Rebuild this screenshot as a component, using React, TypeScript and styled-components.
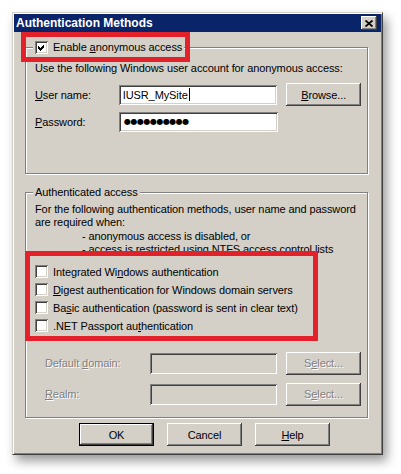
import React from 'react';
import styled, { createGlobalStyle, css } from 'styled-components';

const Global = createGlobalStyle`
  *, *::before, *::after { box-sizing: border-box; }
  html, body { margin: 0; padding: 0; background: #fff; }
  body { font-family: "Liberation Sans", Arial, sans-serif; font-size: 11px; letter-spacing: -0.1px; color: #000; }
`;

const Page = styled.div`
  width: 401px;
  height: 474px;
  padding: 12px 0 0 12px;
  overflow: hidden;
  background: #fff;
`;

const Window = styled.div`
  position: relative;
  width: 371px;
  height: 443px;
  background: #d4d0c8;
  border: 1px solid;
  border-color: #d4d0c8 #404040 #404040 #d4d0c8;
  padding: 1px;
  box-shadow: inset 1px 1px 0 #fff, inset -1px -1px 0 #808080, 4px 6px 10px rgba(0, 0, 0, 0.4);
  display: flex;
  flex-direction: column;
`;

const TitleBar = styled.div`
  height: 18px;
  background: #0a246a;
  display: flex;
  align-items: center;
  justify-content: space-between;
  padding: 0 4px 0 2px;
`;

const Title = styled.span`
  color: #fff;
  font-weight: bold;
  font-size: 12px;
  letter-spacing: 0;
  line-height: 18px;
`;

const CloseButton = styled.div`
  width: 16px;
  height: 14px;
  background: #d4d0c8;
  display: flex;
  align-items: center;
  justify-content: center;
  box-shadow: inset -1px -1px 0 #404040, inset 1px 1px 0 #fff, inset -2px -2px 0 #808080;
`;

const Content = styled.div`
  flex: 1;
  display: flex;
  flex-direction: column;
  padding: 15px 13px 0 11px;
`;

const GroupBox = styled.div<{ $height: number; $gap?: number }>`
  height: ${(p) => p.$height}px;
  margin-top: ${(p) => p.$gap ?? 0}px;
  border: 1px solid #808080;
  box-shadow: 1px 1px 0 #fff, inset 1px 1px 0 #fff;
  display: flex;
  flex-direction: column;
  padding: 0 6px 0 9px;
`;

const Legend = styled.div<{ $check?: boolean }>`
  align-self: flex-start;
  display: flex;
  align-items: center;
  gap: 5px;
  height: ${(p) => (p.$check ? 14 : 13)}px;
  line-height: 13px;
  margin: ${(p) => (p.$check ? -8 : -7)}px 0 0 -2px;
  padding: 0 2px;
  background: #d4d0c8;
`;

const Text = styled.div<{ $top?: number; $indent?: number }>`
  line-height: 13.4px;
  margin-top: ${(p) => p.$top ?? 0}px;
  padding-left: ${(p) => p.$indent ?? 0}px;
  white-space: nowrap;
`;

const FieldRow = styled.div<{ $top: number }>`
  display: flex;
  align-items: center;
  height: 23px;
  margin-top: ${(p) => p.$top}px;
`;

const Label = styled.div<{ $width: number; $indent?: number; $disabled?: boolean }>`
  width: ${(p) => p.$width}px;
  padding-left: ${(p) => p.$indent ?? 0}px;
  white-space: nowrap;
  ${(p) =>
    p.$disabled &&
    css`
      color: #808080;
      text-shadow: 1px 1px 0 #fff;
    `}
`;

const Input = styled.div<{ $width: number; $height?: number; $disabled?: boolean }>`
  width: ${(p) => p.$width}px;
  height: ${(p) => p.$height ?? 20}px;
  background: ${(p) => (p.$disabled ? '#d4d0c8' : '#fff')};
  box-shadow: inset 1px 1px 0 #808080, inset -1px -1px 0 #fff, inset 2px 2px 0 #404040,
    inset -2px -2px 0 #d4d0c8;
  display: flex;
  align-items: center;
  padding: 0 4px;
  white-space: nowrap;
`;

const Caret = styled.span`
  display: inline-block;
  width: 1px;
  height: 13px;
  background: #000;
  margin-left: 1px;
`;

const Dots = styled.span`
  font-family: "DejaVu Sans", sans-serif;
  font-size: 8px;
  letter-spacing: -0.5px;
  padding-left: 1px;
`;

const Button = styled.div<{ $default?: boolean; $disabled?: boolean; $left?: number }>`
  width: 75px;
  height: 23px;
  margin-left: ${(p) => p.$left ?? 0}px;
  background: #d4d0c8;
  display: flex;
  align-items: center;
  justify-content: center;
  white-space: nowrap;
  box-shadow: inset -1px -1px 0 #404040, inset 1px 1px 0 #fff, inset -2px -2px 0 #808080;
  ${(p) =>
    p.$default &&
    css`
      border: 1px solid #000;
    `}
  ${(p) =>
    p.$disabled &&
    css`
      color: #808080;
      text-shadow: 1px 1px 0 #fff;
    `}
`;

const Checkbox = styled.div`
  width: 13px;
  height: 13px;
  flex: none;
  background: #fff;
  box-shadow: inset 1px 1px 0 #808080, inset -1px -1px 0 #fff, inset 2px 2px 0 #404040,
    inset -2px -2px 0 #d4d0c8;
  display: flex;
  align-items: center;
  justify-content: center;
`;

const CheckList = styled.div`
  display: flex;
  flex-direction: column;
  margin-top: 6px;
`;

const CheckRow = styled.div`
  display: flex;
  align-items: center;
  gap: 5px;
  height: 18px;
  white-space: nowrap;
`;

const ButtonRow = styled.div`
  display: flex;
  gap: 13px;
  margin-top: 5px;
  padding-left: 54px;
`;

const U = styled.span`
  text-decoration: underline;
`;

const Highlight = styled.div<{ $x: number; $y: number; $w: number; $h: number }>`
  position: absolute;
  left: ${(p) => p.$x}px;
  top: ${(p) => p.$y}px;
  width: ${(p) => p.$w}px;
  height: ${(p) => p.$h}px;
  border: 5px solid #e2212b;
  pointer-events: none;
`;

const CheckMark = () => (
  <svg width="7" height="7" viewBox="0 0 7 7" shapeRendering="crispEdges">
    <path d="M0 2 L2 4 L6 0 L6 3 L2 7 L0 5 Z" fill="#000" />
  </svg>
);

const CloseGlyph = () => (
  <svg width="8" height="7" viewBox="0 0 8 7">
    <path d="M0.5 0.5 L7.5 6.5 M7.5 0.5 L0.5 6.5" stroke="#000" strokeWidth="1.8" />
  </svg>
);

export default function App() {
  return (
    <Page>
      <Global />
      <Window>
        <TitleBar>
          <Title>Authentication Methods</Title>
          <CloseButton>
            <CloseGlyph />
          </CloseButton>
        </TitleBar>
        <Content>
          <GroupBox $height={127}>
            <Legend $check>
              <Checkbox>
                <CheckMark />
              </Checkbox>
              <span>
                Enable <U>a</U>nonymous access
              </span>
            </Legend>
            <Text $top={8}>Use the following Windows user account for anonymous access:</Text>
            <FieldRow $top={8}>
              <Label $width={84}>
                <U>U</U>ser name:
              </Label>
              <Input $width={159}>
                IUSR_MySite
                <Caret />
              </Input>
              <Button $left={9}>
                <span>
                  <U>B</U>rowse...
                </span>
              </Button>
            </FieldRow>
            <FieldRow $top={4}>
              <Label $width={84}>
                <U>P</U>assword:
              </Label>
              <Input $width={159}>
                <Dots>●●●●●●●●●●</Dots>
              </Input>
            </FieldRow>
          </GroupBox>

          <GroupBox $height={226} $gap={18}>
            <Legend>Authenticated access</Legend>
            <Text $top={4}>For the following authentication methods, user name and password</Text>
            <Text>are required when:</Text>
            <Text $indent={47}>- anonymous access is disabled, or</Text>
            <Text $indent={47}>- access is restricted using NTFS access control lists</Text>
            <CheckList>
              <CheckRow>
                <Checkbox />
                <span>
                  Integrated Wi<U>n</U>dows authentication
                </span>
              </CheckRow>
              <CheckRow>
                <Checkbox />
                <span>
                  <U>D</U>igest authentication for Windows domain servers
                </span>
              </CheckRow>
              <CheckRow>
                <Checkbox />
                <span>
                  Ba<U>s</U>ic authentication (password is sent in clear text)
                </span>
              </CheckRow>
              <CheckRow>
                <Checkbox />
                <span>
                  .NET Passport au<U>t</U>hentication
                </span>
              </CheckRow>
            </CheckList>
            <FieldRow $top={17}>
              <Label $width={115} $indent={10} $disabled>
                Default <U>d</U>omain:
              </Label>
              <Input $width={127} $height={21} $disabled />
              <Button $left={9} $disabled>
                <span>
                  S<U>e</U>lect...
                </span>
              </Button>
            </FieldRow>
            <FieldRow $top={8}>
              <Label $width={115} $indent={10} $disabled>
                <U>R</U>ealm:
              </Label>
              <Input $width={127} $height={21} $disabled />
              <Button $left={9} $disabled>
                <span>
                  S<U>e</U>lect...
                </span>
              </Button>
            </FieldRow>
          </GroupBox>

          <ButtonRow>
            <Button $default>OK</Button>
            <Button>Cancel</Button>
            <Button>
              <span>
                <U>H</U>elp
              </span>
            </Button>
          </ButtonRow>
        </Content>
        <Highlight $x={8} $y={19} $w={169} $h={30} />
        <Highlight $x={12} $y={238} $w={293} $h={90} />
      </Window>
    </Page>
  );
}
